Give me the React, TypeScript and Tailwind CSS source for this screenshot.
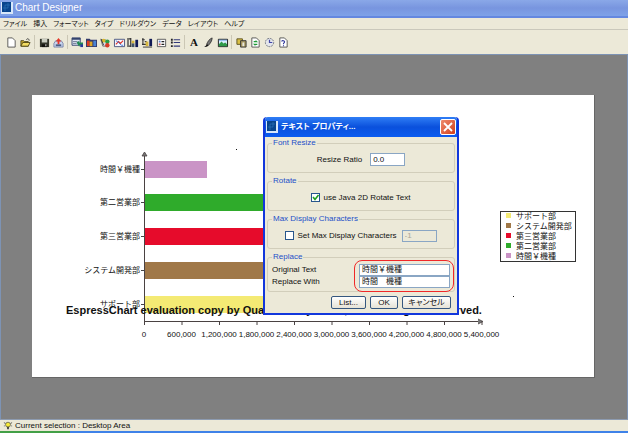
import { useState } from "react";
import type { ReactNode } from "react";

const MENUS = ["ファイル", "挿入", "フォーマット", "タイプ", "ドリルダウン", "データ", "レイアウト", "ヘルプ"];

const BARS = [
  { label: "時間￥機種", color: "#ca94c6", y: 161, end: 207 },
  { label: "第二営業部", color: "#2fab2b", y: 194, end: 300 },
  { label: "第三営業部", color: "#e60b2b", y: 228, end: 300 },
  { label: "システム開発部", color: "#a07848", y: 262, end: 300 },
  { label: "サポート部", color: "#f4ea74", y: 296, end: 300 },
];

const TICKS = ["0", "600,000", "1,200,000", "1,800,000", "2,400,000", "3,000,000", "3,600,000", "4,200,000", "4,800,000", "5,400,000"];

const sheet = <path d="M3 1h5l3 3v7H3z" fill="#fff" stroke="#444" strokeWidth=".9" />;
const bars = (
  <>
    <path d="M1 1v10M4 1v10M2 2l2 0M2 10l2 0" stroke="#333" strokeWidth="1.3" />
    <path d="M5 4h3v3H5z" fill="#d8b83c" />
    <path d="M5 7h3v4H5z" fill="#456" />
    <path d="M9 3h3v8H9z" fill="#111a55" />
  </>
);

const TOOLS: { name: string; art: ReactNode }[][] = [
  [
    { name: "New", art: sheet },
    {
      name: "Open",
      art: (
        <>
          <path d="M2 4h3l1 1h4v5H2z" fill="#c9a92e" stroke="#443c10" strokeWidth=".9" />
          <path d="M2 10l2-4h8l-2 4z" fill="#f3dc62" stroke="#443c10" strokeWidth=".9" />
          <path d="M8 3c1-2 3-1 3 1" fill="none" stroke="#333" />
        </>
      ),
    },
  ],
  [
    {
      name: "Save",
      art: (
        <>
          <path d="M2 2h10v9H2z" fill="#33352a" />
          <path d="M4 2h6v4H4z" fill="#c9ccc0" />
          <path d="M4 8h6v3H4z" fill="#11110c" />
          <path d="M8 8h1v2H8z" fill="#eee" />
        </>
      ),
    },
    {
      name: "Export",
      art: (
        <>
          <path d="M2 7l2-3h6l2 3v4H2z" fill="#c8d4ee" stroke="#62719b" strokeWidth=".8" />
          <path d="M7 1l3 4H8v3H6V5H4z" fill="#e3382a" />
          <path d="M4 8h6v2H4z" fill="#4b5d85" />
        </>
      ),
    },
  ],
  [
    {
      name: "Chart wizard",
      art: (
        <>
          <path d="M1 1h9v8H1z" fill="#dfe7f5" stroke="#34446e" />
          <path d="M1 1h9v2H1z" fill="#34446e" />
          <path d="M2 5h5M2 7h4" stroke="#6b7690" />
          <path d="M6 6l3-2v2h4v3H9v2z" fill="#218a54" />
          <path d="M10 8h3v3h-3z" fill="#26389b" />
        </>
      ),
    },
    {
      name: "Chart type",
      art: (
        <>
          <path d="M1 2h4l1 1h7v8H1z" fill="#333a6a" />
          <path d="M2 4h3v6H2z" fill="#dc3c23" />
          <path d="M5 5h3v5H5z" fill="#dca826" />
          <path d="M9 4h3v6H9z" fill="#4a83d4" />
        </>
      ),
    },
    {
      name: "Colours",
      art: (
        <>
          <path d="M2 3h5l2 2v5H4z" fill="#d9dde6" stroke="#555" strokeWidth=".8" />
          <circle cx="5" cy="4" r="2" fill="#d6b72a" />
          <circle cx="9" cy="5" r="2.4" fill="#2b9a43" />
          <circle cx="9" cy="9" r="2.4" fill="#d73a25" />
          <path d="M2 2l3 7" stroke="#333" />
        </>
      ),
    },
    {
      name: "Line options",
      art: (
        <>
          <path d="M1.500 2.500h11v8h-11z" fill="#f6f7ff" stroke="#46517d" />
          <path d="M3 8l3-3 2 2 3-3" fill="none" stroke="#df3427" strokeWidth="1.200" />
          <path d="M3 4l3 2 3 3h2" fill="none" stroke="#3a75d7" />
        </>
      ),
    },
    { name: "Axis scale", art: bars },
    {
      name: "Axis elements",
      art: (
        <>
          <path d="M1 3h3M2 1v7M4 5h2M1 8h5" stroke="#333" strokeWidth="1.200" />
          <path d="M5 5h3v5H5z" fill="#d8b83c" />
          <path d="M9 2h3v8H9z" fill="#111a55" />
          <path d="M2 11h10" stroke="#333" />
        </>
      ),
    },
    {
      name: "Legend",
      art: (
        <>
          <path d="M2.500 2.500h9v8h-9z" fill="#fff" stroke="#555" />
          <path d="M4 4h2v2H4z" fill="#5d80c8" />
          <path d="M4 7h2v2H4z" fill="#c85d5d" />
          <path d="M7 5h3M7 8h3" stroke="#222" strokeWidth="1.500" />
        </>
      ),
    },
    {
      name: "Table",
      art: (
        <>
          <path d="M5 3h7M5 6h7M5 10h7" stroke="#333a7a" strokeWidth="1.300" />
          <path d="M2 2h2v2H2zM2 5h2v2H2zM2 9h2v2H2z" fill="#222" />
        </>
      ),
    },
  ],
  [
    { name: "Font", art: null },
    {
      name: "Pen",
      art: (
        <>
          <path d="M11 1c-3 1-5 4-6 7l2 1c2-2 4-5 4-8z" fill="#777" stroke="#222" strokeWidth=".8" />
          <path d="M5 8l2 1c-1 2-3 2-5 2 1 0 2-1 3-3z" fill="#141414" />
        </>
      ),
    },
    {
      name: "Background",
      art: (
        <>
          <path d="M2.500 2.500h10v8h-10z" fill="#d8ecff" stroke="#111" />
          <path d="M3 10V8l3-3 2 2 2-1 2 2v2z" fill="#2f9a4a" />
          <path d="M3 3h9v1H3z" fill="#76a8e6" />
        </>
      ),
    },
  ],
  [
    {
      name: "Copy format",
      art: (
        <>
          <path d="M2 2h6v6H2z" fill="#d9bf45" stroke="#5c5120" />
          <path d="M6 4h6v7H6z" fill="#a99a60" stroke="#333" />
          <path d="M8 6h2v4H8z" fill="#e8e8e0" />
        </>
      ),
    },
    { name: "Refresh", art: <>{sheet}<path d="M5 5h3l-1-1M9 8H6l1 1" stroke="#1d9b36" strokeWidth="1.500" fill="none" /></> },
    {
      name: "Schedule",
      art: (
        <>
          <circle cx="7" cy="6" r="4.500" fill="#e3e5ea" stroke="#666b78" strokeDasharray="2 1" />
          <path d="M7 3v3h3" fill="none" stroke="#4147a8" strokeWidth="1.300" />
        </>
      ),
    },
    { name: "Help", art: <>{sheet}<path d="M5 5c0-2 4-1 3 1l-1 1v1M7 9v1" stroke="#323a9c" strokeWidth="1.200" fill="none" /></> },
  ],
];

function AppIcon({ className }: { className: string }) {
  return (
    <svg viewBox="0 0 12 12" className={className} aria-hidden="true">
      <path d="M0 0h12v12H0z" fill="#d8e8fa" />
      <path d="M1 0h9v10H1z" fill="#07448d" />
      <path d="M2 6h5V1M4 9V3h5" fill="none" stroke="#2d72b8" strokeWidth=".7" />
    </svg>
  );
}

function Chart() {
  return (
    <svg viewBox="32 95 562 282" className="block w-full text-[8px]" fontFamily='"Liberation Sans", "Noto Sans CJK JP", sans-serif' role="img" aria-label="Chart">
      {BARS.map(b => (
        <g key={b.label}>
          <rect x="145" y={b.y} width={b.end - 145} height="17" fill={b.color} />
          <path d={`M141 ${b.y + 8.5}h3`} stroke="#444" />
          <text x="140" y={b.y + 11} textAnchor="end" fill="#111">{b.label}</text>
        </g>
      ))}
      <path d="M144.500 153v168.500H482" fill="none" stroke="#4a4242" />
      <path d="M142 156l2.500-4 2.500 4zM478 319l5 2.500-5 2.500" fill="#777" stroke="#4a4242" strokeWidth=".8" />
      {TICKS.map((t, i) => (
        <g key={t}>
          <path d={`M${144.5 + i * 37.5} 321v4`} stroke="#4a4242" />
          <text x={144 + i * 37.5} y="337" textAnchor="middle" fill="#111">{t}</text>
        </g>
      ))}
      <text x="66" y="314" fill="#111" className="text-[11px] font-bold">
        {"EspressChart evaluation copy by Quadbase Systems, Inc.\u00a0 All Rights Reserved."}
      </text>
      <rect x="500.500" y="211.500" width="75" height="50" fill="#fff" stroke="#333" />
      {[...BARS].reverse().map((b, i) => (
        <g key={b.label}>
          <rect x="506" y={213 + i * 10} width="5" height="5" fill={b.color} />
          <text x="516" y={219 + i * 10} fill="#111">{b.label}</text>
        </g>
      ))}
      <path d="M236 149h1v1h-1zM513 296h1v1h-1z" fill="#111" />
    </svg>
  );
}

function Group({ title, children }: { title: string; children: ReactNode }) {
  return (
    <fieldset className="min-w-0 rounded-[3px] border border-[#d2cebb] px-1">
      <legend className="px-px leading-[8px] text-[#1c50c8]">{title}</legend>
      {children}
    </fieldset>
  );
}

function Check({ label, checked, onChange }: { label: string; checked: boolean; onChange: (v: boolean) => void }) {
  return (
    <label className="flex items-center gap-[3px]">
      <span className="relative flex">
        <input type="checkbox" checked={checked} onChange={e => onChange(e.target.checked)} className="size-[9px] appearance-none border border-[#28568c] bg-white" />
        {checked && (
          <svg viewBox="0 0 9 9" className="pointer-events-none absolute inset-0 size-[9px]" aria-hidden="true">
            <path d="M2 4l2 2.500 3.500-4.500" fill="none" stroke="#21a121" strokeWidth="1.600" />
          </svg>
        )}
      </span>
      {label}
    </label>
  );
}

const field = "border border-[#8aa6c4] bg-white px-[2px] text-[8px] outline-none";
const button = "h-[13px] rounded-[2px] border border-[#35577f] bg-linear-to-b from-white to-[#e6e3d6] leading-[10px]";

function TextDialog() {
  const [rotate, setRotate] = useState(true);
  const [limit, setLimit] = useState(false);

  return (
    <section role="dialog" aria-labelledby="dialog-title" className="absolute left-[262px] top-[62px] w-[196px] rounded-t-[4px] border-2 border-t-0 border-[#1237dc] bg-[#ece9d8] text-[8px] text-[#111]">
      <header className="flex h-5 items-center gap-[3px] rounded-t-[3px] bg-linear-to-b from-[#2f7df5] via-[#0a50dc] to-[#0b5cf0] px-px">
        <AppIcon className="size-[12px]" />
        <h2 id="dialog-title" className="flex-1 text-[8px] font-bold leading-3 text-white [font-feature-settings:'palt']">テキスト プロパティ...</h2>
        <button aria-label="Close" className="flex size-[16px] items-center justify-center rounded-[2px] border border-white bg-linear-to-br from-[#ee8a6c] to-[#d23c14]">
          <svg viewBox="0 0 10 10" className="size-[10px]" aria-hidden="true">
            <path d="M1 1l8 8M9 1L1 9" stroke="#fff" strokeWidth="1.800" />
          </svg>
        </button>
      </header>

      <form className="flex flex-col gap-1 p-[2px] pb-1" onSubmit={e => e.preventDefault()}>
        <Group title="Font Resize">
          <label className="flex h-[25px] items-center justify-center gap-2">
            Resize Ratio
            <input defaultValue="0.0" className={`${field} h-[13px] w-[35px]`} />
          </label>
        </Group>
        <Group title="Rotate">
          <div className="flex h-[25px] items-center justify-center">
            <Check label="use Java 2D Rotate Text" checked={rotate} onChange={setRotate} />
          </div>
        </Group>
        <Group title="Max Display Characters">
          <div className="flex h-[25px] items-center justify-center gap-[5px]">
            <Check label="Set Max Display Characters" checked={limit} onChange={setLimit} />
            <input aria-label="Max characters" defaultValue="-1" disabled={!limit} className={`${field} h-[12px] w-[35px] disabled:bg-[#ece9d8] disabled:text-[#aaa797]`} />
          </div>
        </Group>
        <Group title="Replace">
          <div className="relative grid grid-cols-[1fr_91px] items-center py-[3px]">
            <label htmlFor="original">Original Text</label>
            <input id="original" defaultValue="時間￥機種" className={`${field} h-[12px] w-full`} />
            <label htmlFor="replace">Replace With</label>
            <input id="replace" defaultValue="時間　機種" className={`${field} h-[12px] w-full`} />
            <span className="pointer-events-none absolute -bottom-px -right-1 -top-px w-[100px] rounded-[8px] border border-[#f02828]" />
          </div>
        </Group>
        <div className="flex justify-end gap-1 pr-1">
          <button className={`${button} w-[35px]`}>List...</button>
          <button className={`${button} w-[28px]`}>OK</button>
          <button className={`${button} w-[49px] [font-feature-settings:'palt']`}>キャンセル</button>
        </div>
      </form>
    </section>
  );
}

export default function App() {
  return (
    <div className="flex min-h-screen flex-col bg-[#ece9d8] font-['Liberation_Sans','Noto_Sans_CJK_JP',sans-serif] text-[8px] leading-[12px] text-[#111]">
      <header className="flex h-[18px] items-center gap-[2px] border-b-2 border-[#6488e0] bg-linear-to-b from-[#8aa8e8] via-[#7895df] to-[#7ea2e8] px-px">
        <AppIcon className="size-[12px]" />
        <h1 className="text-[10px] leading-4 text-white">Chart Designer</h1>
      </header>

      <nav className="flex h-[12px] items-center gap-[6px] border-b border-[#cac8bb] px-[3px] text-[7px] [font-feature-settings:'palt']">
        {MENUS.map(m => <button key={m} className="leading-[10px]">{m}</button>)}
      </nav>

      <div role="toolbar" className="flex h-6 items-center pl-1">
        {TOOLS.map((group, i) => (
          <div key={i} className="flex items-center">
            {i > 0 && <span className="mx-[2px] h-[14px] w-px bg-[#cbc7b5]" />}
            {group.map(t => (
              <button key={t.name} aria-label={t.name} className="flex h-4 w-[14px] items-center justify-center">
                {t.art
                  ? <svg viewBox="0 0 14 12" className="h-[11px] w-[13px]" aria-hidden="true">{t.art}</svg>
                  : <span className="font-['Liberation_Serif',serif] text-[11px] font-bold">A</span>}
              </button>
            ))}
          </div>
        ))}
      </div>

      <main className="relative flex-1 border-x border-t border-[#7d93b4] bg-[#808080] pb-10 pl-[31px] pr-8 pt-10">
        <div className="border-b border-r border-[#666] bg-white">
          <Chart />
        </div>
        <TextDialog />
      </main>

      <footer className="flex h-[12px] items-center gap-[2px] border-t border-[#8d9bb0] px-[3px]">
        <svg viewBox="0 0 12 11" className="h-[9px] w-[10px]" aria-hidden="true">
          <path d="M1 2l2 1M1 6h1M11 2L9 3M11 6h-1" stroke="#444" />
          <circle cx="6" cy="4.500" r="3" fill="#f6ea3a" stroke="#444" strokeWidth=".8" />
          <path d="M5 7h2v3H5z" fill="#333" />
        </svg>
        <p>Current selection : Desktop Area</p>
      </footer>
      <div className="flex h-[2px] bg-[#3f82e8]">
        <span className="w-[70px] bg-[#43a047]" />
      </div>
    </div>
  );
}
